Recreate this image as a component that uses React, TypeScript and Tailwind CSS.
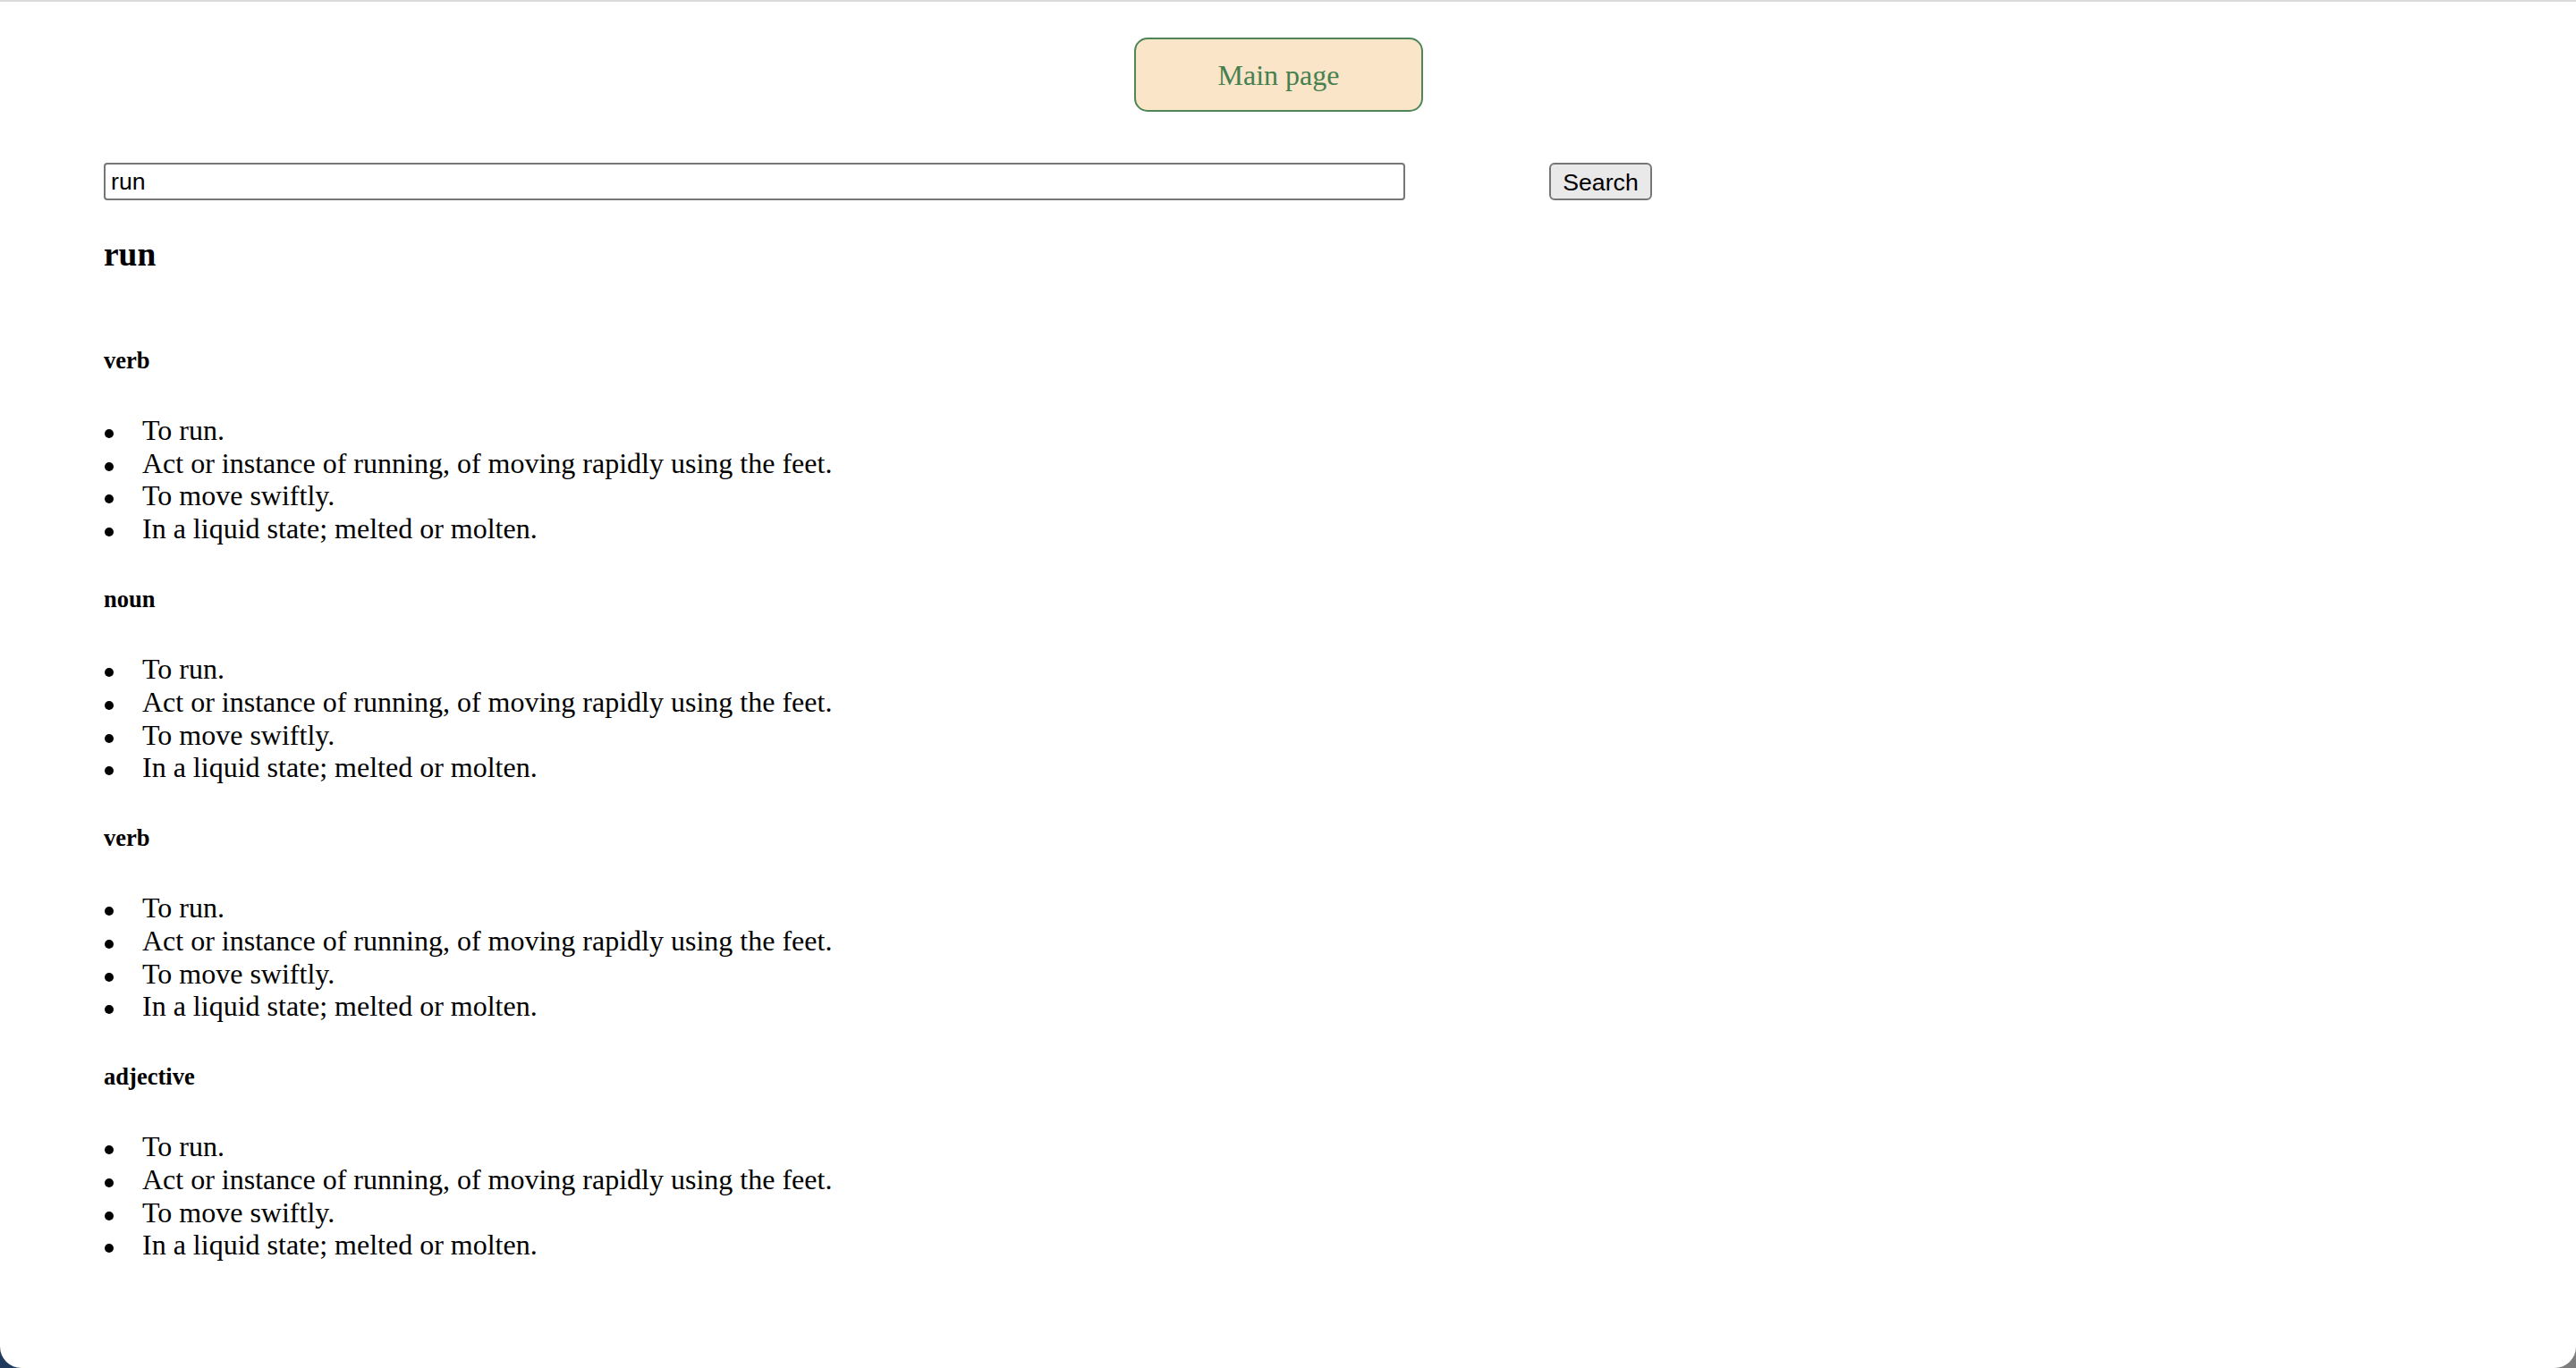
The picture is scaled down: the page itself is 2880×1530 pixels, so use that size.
import React from 'react';

const senses = [
  'To run.',
  'Act or instance of running, of moving rapidly using the feet.',
  'To move swiftly.',
  'In a liquid state; melted or molten.',
];

const partsOfSpeech = ['verb', 'noun', 'verb', 'adjective'];

const Section = ({ label }: { label: string }) => (
  <div>
    <h5 className="my-[44.7px] text-[26.56px] font-bold leading-[30.5px] text-black">{label}</h5>
    <ul>
      {senses.map((sense, i) => (
        <li key={i} className="flex text-[32px] leading-[36.8px] text-black">
          <span className="ml-[1px] mt-[17px] h-[10px] w-[10px] shrink-0 rounded-full bg-black" />
          <span className="ml-[32px]">{sense}</span>
        </li>
      ))}
    </ul>
  </div>
);

const App = () => {
  return (
    <div className="h-[1530px] w-full bg-linear-to-r from-[#1f3a5c] to-[#7d7d7d]">
      <div className="h-full w-full overflow-hidden rounded-b-[24px] border-t-2 border-[#dadada] bg-white font-['Liberation_Serif',serif]">
        <div className="flex justify-center pr-[21px] pt-[40px]">
          <button className="flex h-[83px] w-[323px] items-center justify-center rounded-[15px] border-2 border-[#4e8658] bg-[#fae5c8] text-[32px] text-[#45804f]">
            Main page
          </button>
        </div>

        <div className="pl-[116px]">
          <div className="mt-[57px] flex items-center">
            <input
              defaultValue="run"
              className="h-[42px] w-[1455px] rounded-[4px] border-2 border-[#767676] bg-white px-[6px] font-['Liberation_Sans',sans-serif] text-[26.67px] text-black outline-none"
            />
            <button className="ml-[161px] h-[42px] w-[115px] rounded-[6px] border-2 border-[#767676] bg-[#e9e9e9] font-['Liberation_Sans',sans-serif] text-[26.67px] text-black">
              Search
            </button>
          </div>

          <h3 className="mt-[39px] text-[37.44px] font-bold leading-[43px] text-black">run</h3>

          <div className="pt-[37px]">
            {partsOfSpeech.map((pos, i) => (
              <Section key={i} label={pos} />
            ))}
          </div>
        </div>
      </div>
    </div>
  );
};

export default App;
